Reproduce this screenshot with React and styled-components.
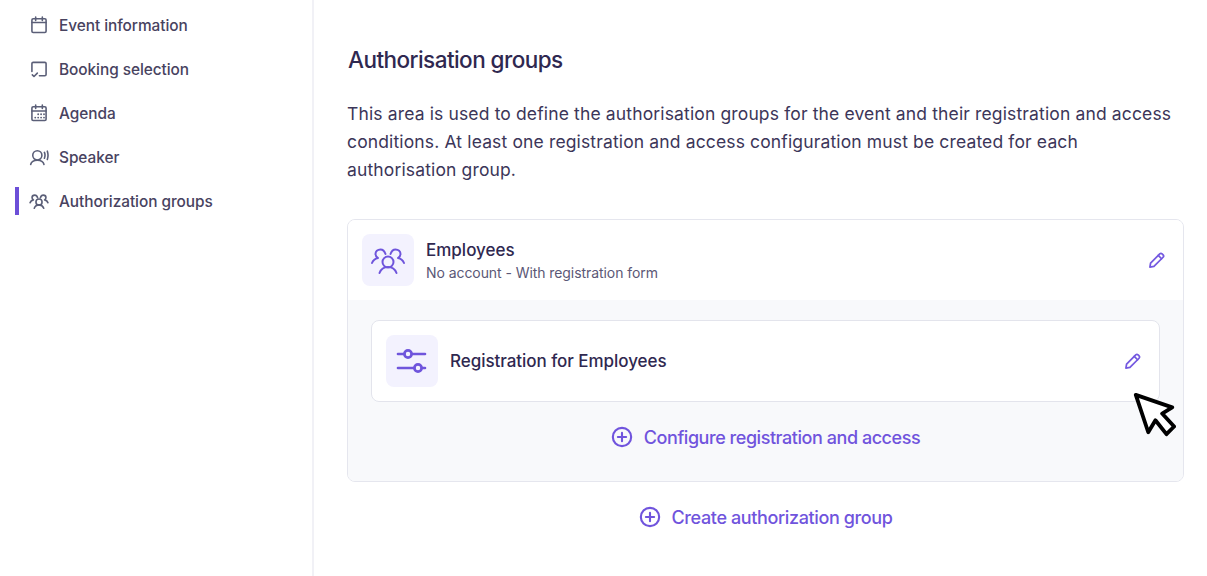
import styled, { createGlobalStyle } from 'styled-components';

const GlobalStyle = createGlobalStyle`
  html, body {
    margin: 0;
    height: 100%;
    background: #fff;
    overflow: hidden;
    font-family: "Inter", "Liberation Sans", sans-serif;
    color: #2f2850;
  }
`;

const navItems = [
  { label: 'Event information', icon: 'calendar' },
  { label: 'Booking selection', icon: 'booking' },
  { label: 'Agenda', icon: 'agenda' },
  { label: 'Speaker', icon: 'speaker' },
  { label: 'Authorization groups', icon: 'groups', active: true },
];

// drawn on a 36 unit grid, the sidebar scales it down
const GroupsGlyph = () => (
  <>
    <circle cx="18" cy="20" r="5.500" />
    <path d="M9.500 31c1.500-4 4.500-6 8.500-6s7 2 8.500 6" />
    <path d="M15.500 12C14.500 9 12.500 7.500 10.500 7.500 7.500 7.500 5.500 9.500 5.500 12c0 1.500 1 3 2.500 4C5.500 16.500 3 18.500 2 21" />
    <path d="M20.500 12C21.500 9 23.500 7.500 25.500 7.500c3 0 5 2 5 4.500 0 1.500-1 3-2.500 4 2.500.5 5 2.500 6 5" />
  </>
);

const NavGlyph = ({ name }) => {
  if (name === 'calendar') {
    return (
      <>
        <rect x="3.500" y="4.500" width="17" height="16.500" rx="1.500" />
        <path d="M3.500 9h17M8 2.500v4M16 2.500v4" />
      </>
    );
  }
  if (name === 'booking') {
    return (
      <>
        <path d="M3.500 15V5.500A1.500 1.500 0 0 1 5 4h14a1.500 1.500 0 0 1 1.500 1.500v13A1.500 1.500 0 0 1 19 20h-6.500" />
        <path d="M4 19l2 2 4-4" />
      </>
    );
  }
  if (name === 'agenda') {
    return (
      <>
        <rect x="3.500" y="4.500" width="17" height="16.500" rx="1.500" />
        <path d="M3.500 9.500h17M8 2.500v4M16 2.500v4" />
        <path d="M11 13.500h.01M14.500 13.500h.01M18 13.500h.01M7.500 17.500h.01M11 17.500h.01M14.500 17.500h.01M18 17.500h.01" strokeWidth="2.200" />
      </>
    );
  }
  if (name === 'speaker') {
    return (
      <>
        <circle cx="10" cy="10" r="5.500" />
        <path d="M2 21c.7-3.200 3.300-5.200 8-5.200s7.300 2 8 5.200" />
        <path d="M18.500 6.500c.9 2.200.9 4.800 0 7M22 5c1 3 1 7 0 10" />
      </>
    );
  }
  return (
    <g transform="scale(0.667)" strokeWidth="2.900">
      <GroupsGlyph />
    </g>
  );
};

const Pencil = () => (
  <PencilIcon viewBox="0 0 24 24">
    <path d="M4.300 15.700L15.300 4.700a2 2 0 0 1 2.800 0l1.200 1.200a2 2 0 0 1 0 2.800L8.300 19.700 3.500 20.500z" />
    <path d="M13.500 6.500l4 4" />
  </PencilIcon>
);

const PlusCircle = () => (
  <LinkIcon viewBox="0 0 24 24">
    <circle cx="12" cy="12" r="10" />
    <path d="M12 7.500v9M7.500 12h9" />
  </LinkIcon>
);

export default function App() {
  return (
    <Page>
      <GlobalStyle />
      <Sidebar>
        {navItems.map((item) => (
          <NavItem key={item.label} $active={item.active}>
            <NavIcon viewBox="0 0 24 24">
              <NavGlyph name={item.icon} />
            </NavIcon>
            {item.label}
          </NavItem>
        ))}
      </Sidebar>
      <Main>
        <Title>Authorisation groups</Title>
        <Intro>
          This area is used to define the authorisation groups for the event and their registration and access
          conditions. At least one registration and access configuration must be created for each
          authorisation group.
        </Intro>
        <GroupCard>
          <GroupHeader>
            <IconTile>
              <TileIcon viewBox="0 0 36 36" $size={36}>
                <GroupsGlyph />
              </TileIcon>
            </IconTile>
            <GroupText>
              <GroupName>Employees</GroupName>
              <GroupMeta>No account - With registration form</GroupMeta>
            </GroupText>
            <Pencil />
          </GroupHeader>
          <GroupBody>
            <ConfigRow>
              <IconTile>
                <TileIcon viewBox="0 0 24 24" $size={32}>
                  <path d="M1.500 6.750h4.800M12 6.750h9.750M1.500 17.250h12.300M19.500 17.250h2.250" />
                  <circle cx="9" cy="6.750" r="2.700" />
                  <circle cx="16.500" cy="17.250" r="2.700" />
                </TileIcon>
              </IconTile>
              <ConfigName>Registration for Employees</ConfigName>
              <Pencil />
            </ConfigRow>
            <ActionLink>
              <PlusCircle />
              Configure registration and access
            </ActionLink>
          </GroupBody>
        </GroupCard>
        <CreateLink>
          <PlusCircle />
          Create authorization group
        </CreateLink>
      </Main>
      <Cursor viewBox="0 0 44 48">
        <path d="M3 3L16 42 23.500 29.500 35 44 43 36 30.500 22.500 41 16z" />
      </Cursor>
    </Page>
  );
}

const Page = styled.div`
  position: relative;
  display: flex;
  width: 100%;
  height: 100vh;
  overflow: hidden;
`;

const Sidebar = styled.nav`
  flex: 0 0 314px;
  box-sizing: border-box;
  height: 100%;
  padding-top: 3px;
  padding-left: 15px;
  border-right: 2px solid #f1f1f6;
`;

const NavItem = styled.div`
  display: flex;
  align-items: center;
  gap: 10px;
  height: 44px;
  box-sizing: border-box;
  padding-left: 15px;
  font-size: 15.400px;
  font-weight: 500;
  letter-spacing: -0.05px;
  color: #48435f;
  position: relative;

  ${(p) => p.$active && `
    &::before {
      content: '';
      position: absolute;
      left: 0;
      top: 8px;
      width: 4px;
      height: 28px;
      background: #6c4fd8;
    }
  `}
`;

const NavIcon = styled.svg`
  width: 20px;
  height: 20px;
  margin-left: -1px;
  fill: none;
  stroke: #5b5f78;
  stroke-width: 1.900;
  stroke-linecap: round;
  stroke-linejoin: round;
  flex-shrink: 0;
`;

const Main = styled.main`
  flex: 0 0 837px;
  box-sizing: border-box;
  margin-left: 33px;
  padding-top: 45px;
`;

const Title = styled.h1`
  margin: 0 0 0 1px;
  font-size: 22.500px;
  line-height: 30px;
  font-weight: 500;
  letter-spacing: -0.55px;
  color: #2f2850;
`;

const Intro = styled.p`
  margin: 25px 0 0;
  font-size: 17.500px;
  line-height: 28px;
  font-weight: 400;
  letter-spacing: 0.14px;
  color: #3c3659;
`;

const GroupCard = styled.section`
  margin-top: 35px;
  border: 1px solid #e5e6ee;
  border-radius: 8px;
  overflow: hidden;
`;

const GroupHeader = styled.div`
  display: flex;
  align-items: center;
  height: 80px;
  padding: 0 16px 0 14px;
  background: #fff;
`;

const IconTile = styled.div`
  display: flex;
  align-items: center;
  justify-content: center;
  width: 52px;
  height: 52px;
  border-radius: 8px;
  background: #f3f2fe;
  flex-shrink: 0;
`;

const TileIcon = styled.svg`
  width: ${(p) => p.$size}px;
  height: ${(p) => p.$size}px;
  fill: none;
  stroke: #6f55dc;
  stroke-width: 2;
  stroke-linecap: round;
  stroke-linejoin: round;
`;

const GroupText = styled.div`
  flex: 1;
  margin-left: 12px;
`;

const GroupName = styled.div`
  font-size: 17px;
  line-height: 24px;
  font-weight: 500;
  letter-spacing: 0;
  color: #2f2850;
`;

const GroupMeta = styled.div`
  margin-top: 1px;
  font-size: 14px;
  line-height: 20px;
  letter-spacing: -0.07px;
  color: #5b5876;
`;

const PencilIcon = styled.svg`
  width: 20px;
  height: 20px;
  fill: none;
  stroke: #7459e0;
  stroke-width: 2.100;
  stroke-linecap: round;
  stroke-linejoin: round;
  flex-shrink: 0;
`;

const GroupBody = styled.div`
  padding: 20px 23px 0;
  height: 181px;
  box-sizing: border-box;
  background: #f8f9fb;
`;

const ConfigRow = styled.div`
  display: flex;
  align-items: center;
  height: 80px;
  padding: 0 16px 0 14px;
  background: #fff;
  border: 1px solid #e3e4ec;
  border-radius: 8px;
`;

const ConfigName = styled.div`
  flex: 1;
  margin-left: 12px;
  font-size: 17px;
  font-weight: 500;
  letter-spacing: -0.05px;
  color: #2f2850;
`;

const ActionLink = styled.div`
  display: flex;
  align-items: center;
  justify-content: center;
  gap: 11px;
  margin-top: 22px;
  height: 26px;
  font-size: 18px;
  font-weight: 500;
  letter-spacing: -0.45px;
  color: #7054dd;
`;

const CreateLink = styled(ActionLink)`
  margin-top: 22px;
  letter-spacing: -0.38px;
`;

const LinkIcon = styled.svg`
  width: 22px;
  height: 22px;
  fill: none;
  stroke: #7054dd;
  stroke-width: 2.300;
  stroke-linecap: round;
  flex-shrink: 0;
`;

const Cursor = styled.svg`
  position: absolute;
  left: 1132px;
  top: 392px;
  width: 44px;
  height: 46px;
  fill: #fff;
  stroke: #000;
  stroke-width: 4;
  stroke-linejoin: round;
`;
